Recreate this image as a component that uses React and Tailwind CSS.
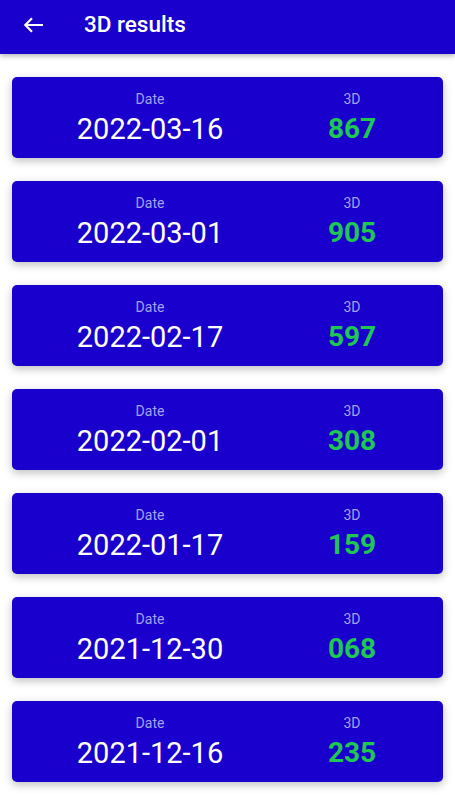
import React from 'react'

const results = [
  { date: '2022-03-16', num: '867' },
  { date: '2022-03-01', num: '905' },
  { date: '2022-02-17', num: '597' },
  { date: '2022-02-01', num: '308' },
  { date: '2022-01-17', num: '159' },
  { date: '2021-12-30', num: '068' },
  { date: '2021-12-16', num: '235' },
];

function ResultCard({ date, num }) {
  return (
    <div className="h-[81px] rounded-[5px] bg-[#1a00cc] shadow-[0_3px_8px_rgba(0,0,0,0.25)] grid grid-cols-[276px_128px] pt-[14px]">
      <div className="flex flex-col items-center">
        <span className="text-[14px] leading-[16px] text-[#a3a3f5]">Date</span>
        <span className="mt-[5px] text-[29px] leading-[34px] text-white">{date}</span>
      </div>
      <div className="flex flex-col items-center">
        <span className="text-[14px] leading-[16px] text-[#a3a3f5]">3D</span>
        <span className="mt-[5px] text-[28px] leading-[34px] font-bold text-[#1ec853]">{num}</span>
      </div>
    </div>
  );
}

export default function App() {
  return (
    <div className="min-h-screen bg-white font-['Roboto',sans-serif]">
      {/* Top bar */}
      <div className="h-[54px] pb-[6px] bg-[#1a00cc] flex items-center shadow-[0_2px_5px_rgba(0,0,0,0.3)]">
        <svg className="ml-[23px] mt-[2px] w-[20px] h-[16px]" viewBox="0 0 20 16" fill="none" stroke="white" strokeWidth="2.2" strokeLinejoin="miter">
          <path d="M20 8H2.5M9 1.3L2.3 8L9 14.7" />
        </svg>
        <h1 className="ml-[41px] text-[22.5px] leading-[26px] font-medium text-white">3D results</h1>
      </div>

      {/* Results list */}
      <div className="px-[12px] pt-[23px] flex flex-col gap-[23px]">
        {results.map((r, i) => (
          <ResultCard key={i} date={r.date} num={r.num} />
        ))}
      </div>
    </div>
  );
}
